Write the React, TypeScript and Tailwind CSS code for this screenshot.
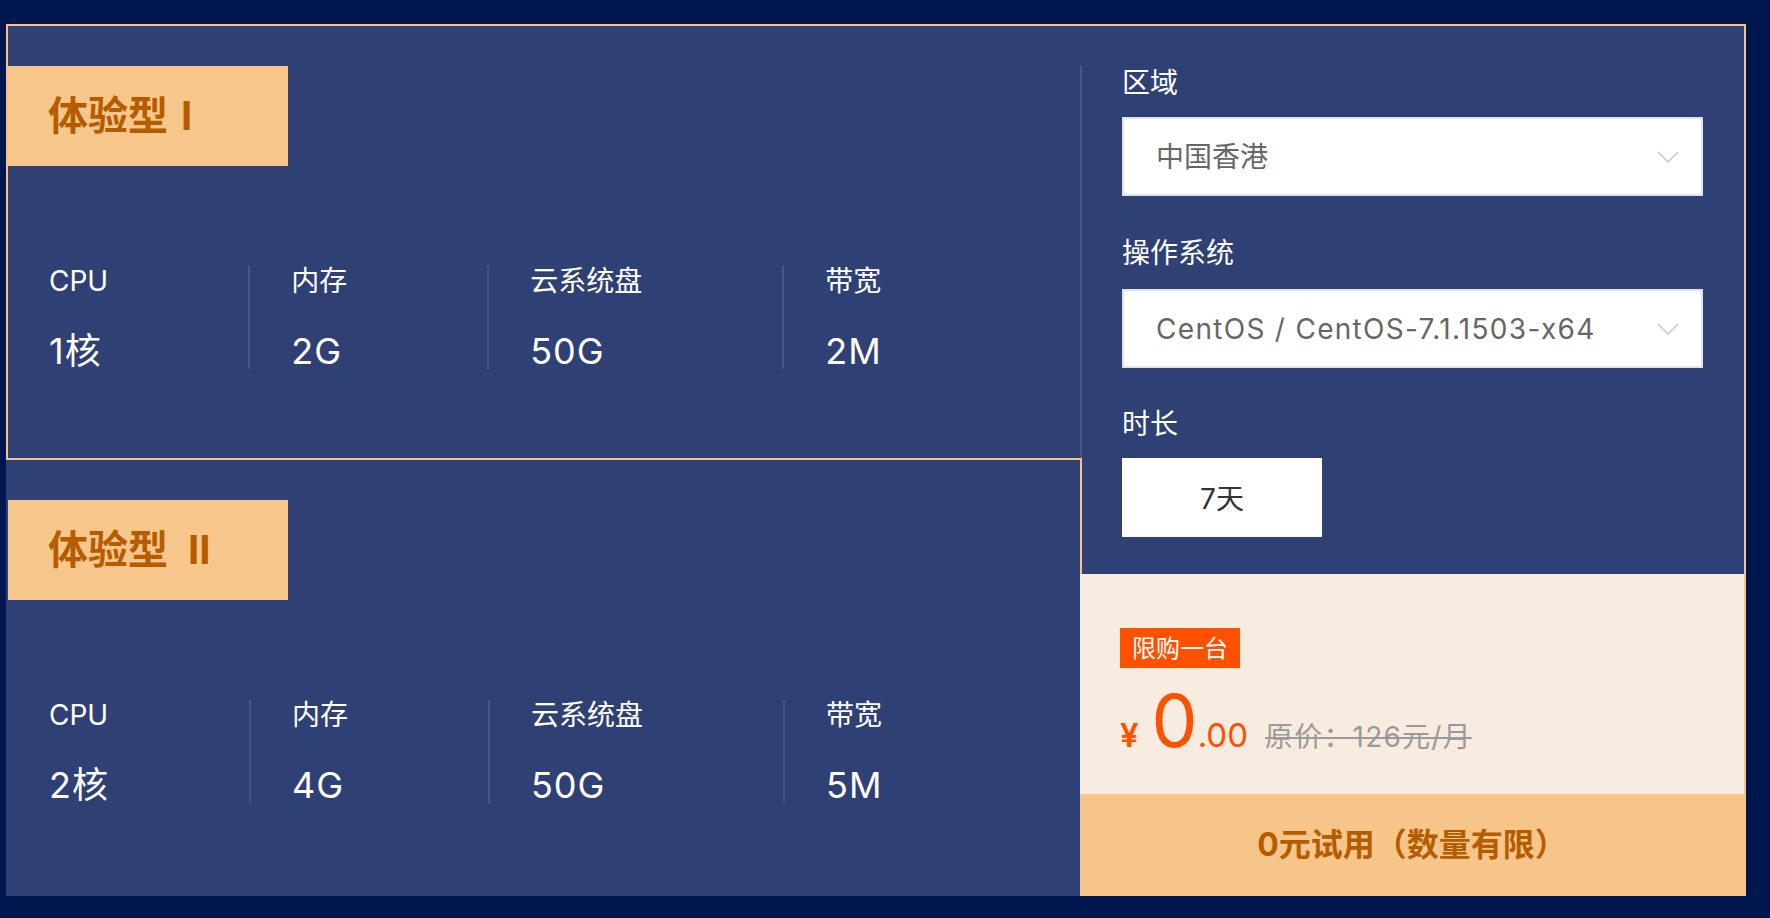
import React from 'react';

type Spec = { label: string; value: string };

type Plan = {
  name: string;
  numeral: string;
  active: boolean;
  specs: Spec[];
};

const plans: Plan[] = [
  {
    name: '体验型',
    numeral: 'I',
    active: true,
    specs: [
      { label: 'CPU', value: '1核' },
      { label: '内存', value: '2G' },
      { label: '云系统盘', value: '50G' },
      { label: '带宽', value: '2M' },
    ],
  },
  {
    name: '体验型',
    numeral: 'II',
    active: false,
    specs: [
      { label: 'CPU', value: '2核' },
      { label: '内存', value: '4G' },
      { label: '云系统盘', value: '50G' },
      { label: '带宽', value: '5M' },
    ],
  },
];

const Chevron = () => (
  <svg width="22" height="12" viewBox="0 0 22 12" fill="none" className="shrink-0">
    <path d="M1 1l10 10L21 1" stroke="#c5c9d2" strokeWidth="1.5" />
  </svg>
);

const PlanCard: React.FC<{ plan: Plan }> = ({ plan }) => (
  <div
    className={
      plan.active
        ? 'h-[434px] border-l-2 border-b-2 border-[#f7c38a] flex flex-col'
        : 'flex-1 border-l-2 border-transparent flex flex-col'
    }
  >
    <div className="mt-[40px] w-[280px] h-[100px] bg-[#f7c68a] flex items-center pl-[40px] text-[40px] font-bold leading-none text-[#b55b00]">
      <span>{plan.name}</span>
      <span className={plan.numeral === 'I' ? 'ml-[13px]' : 'ml-[20px]'}>{plan.numeral}</span>
    </div>
    <div className="mt-[100px] flex">
      {plan.specs.map((s, i) => (
        <div
          key={s.label}
          className={
            i === 0
              ? 'flex flex-col pl-[41px] pr-[140px]'
              : 'flex flex-col pl-[41px] pr-[140px] border-l-2 border-[#43558a]'
          }
        >
          <span className="text-[28px] leading-[30px] text-white whitespace-nowrap">{s.label}</span>
          <span className="mt-[37px] text-[36px] leading-[36px] text-white whitespace-nowrap tracking-[1px]">
            {s.value}
          </span>
        </div>
      ))}
    </div>
  </div>
);

const Select: React.FC<{ value: string; wide?: boolean }> = ({ value, wide }) => (
  <div className="h-[79px] bg-white border-2 border-[#dfe2ea] flex items-center justify-between pl-[32px] pr-[22px]">
    <span
      className={
        wide
          ? 'text-[28px] text-[#666666] whitespace-nowrap tracking-[1.3px]'
          : 'text-[28px] text-[#666666] whitespace-nowrap'
      }
    >
      {value}
    </span>
    <Chevron />
  </div>
);

export default function App() {
  return (
    <div className="min-h-screen w-full bg-[#00164f] pt-[24px] pl-[6px] font-[Inter,'Noto_Sans_CJK_SC',sans-serif]">
      <div className="w-[1740px] h-[872px] bg-[#2f4174] border-t-2 border-r-2 border-[#f7c38a] flex">
        <div className="w-[1074px] flex flex-col">
          {plans.map((p) => (
            <PlanCard key={p.numeral} plan={p} />
          ))}
        </div>

        <div className="flex-1 flex flex-col">
          <div className="h-[548px] flex">
            <div className="w-[2px] flex flex-col">
              <div className="h-[40px]" />
              <div className="h-[392px] bg-[#43558a]" />
              <div className="flex-1 bg-[#f7c38a]" />
            </div>
            <div className="flex-1 flex flex-col pt-[42px] pl-[40px] pr-[41px]">
              <span className="text-[28px] leading-[30px] text-white">区域</span>
              <div className="mt-[19px]">
                <Select value="中国香港" />
              </div>
              <span className="mt-[42px] text-[28px] leading-[30px] text-white">操作系统</span>
              <div className="mt-[21px]">
                <Select value="CentOS / CentOS-7.1.1503-x64" wide />
              </div>
              <span className="mt-[41px] text-[28px] leading-[30px] text-white">时长</span>
              <div className="mt-[19px] w-[200px] h-[79px] bg-white flex items-center justify-center pt-[2px] text-[28px] text-[#333333]">
                7天
              </div>
            </div>
          </div>

          <div className="h-[220px] bg-[#f8ece0] pl-[40px] pt-[54px] flex flex-col">
            <div className="w-[120px] h-[40px] bg-[#ff5000] flex items-center justify-center pt-[2px] text-[24px] text-white">
              限购一台
            </div>
            <div className="mt-[16px] flex items-baseline leading-none">
              <span className="text-[33px] font-semibold text-[#ff5000] mr-[13px]">¥</span>
              <span className="text-[73px] text-[#ff5000]">0</span>
              <span className="text-[33px] text-[#ff5000]">.00</span>
              <span className="ml-[17px] text-[28px] text-[#9a9a9a] line-through tracking-[1.2px]">原价：126元/月</span>
            </div>
          </div>

          <button className="flex-1 bg-[#f7c589] flex items-center justify-center text-[32px] font-bold text-[#b55b00]">
            0元试用（数量有限）
          </button>
        </div>
      </div>
    </div>
  );
}
